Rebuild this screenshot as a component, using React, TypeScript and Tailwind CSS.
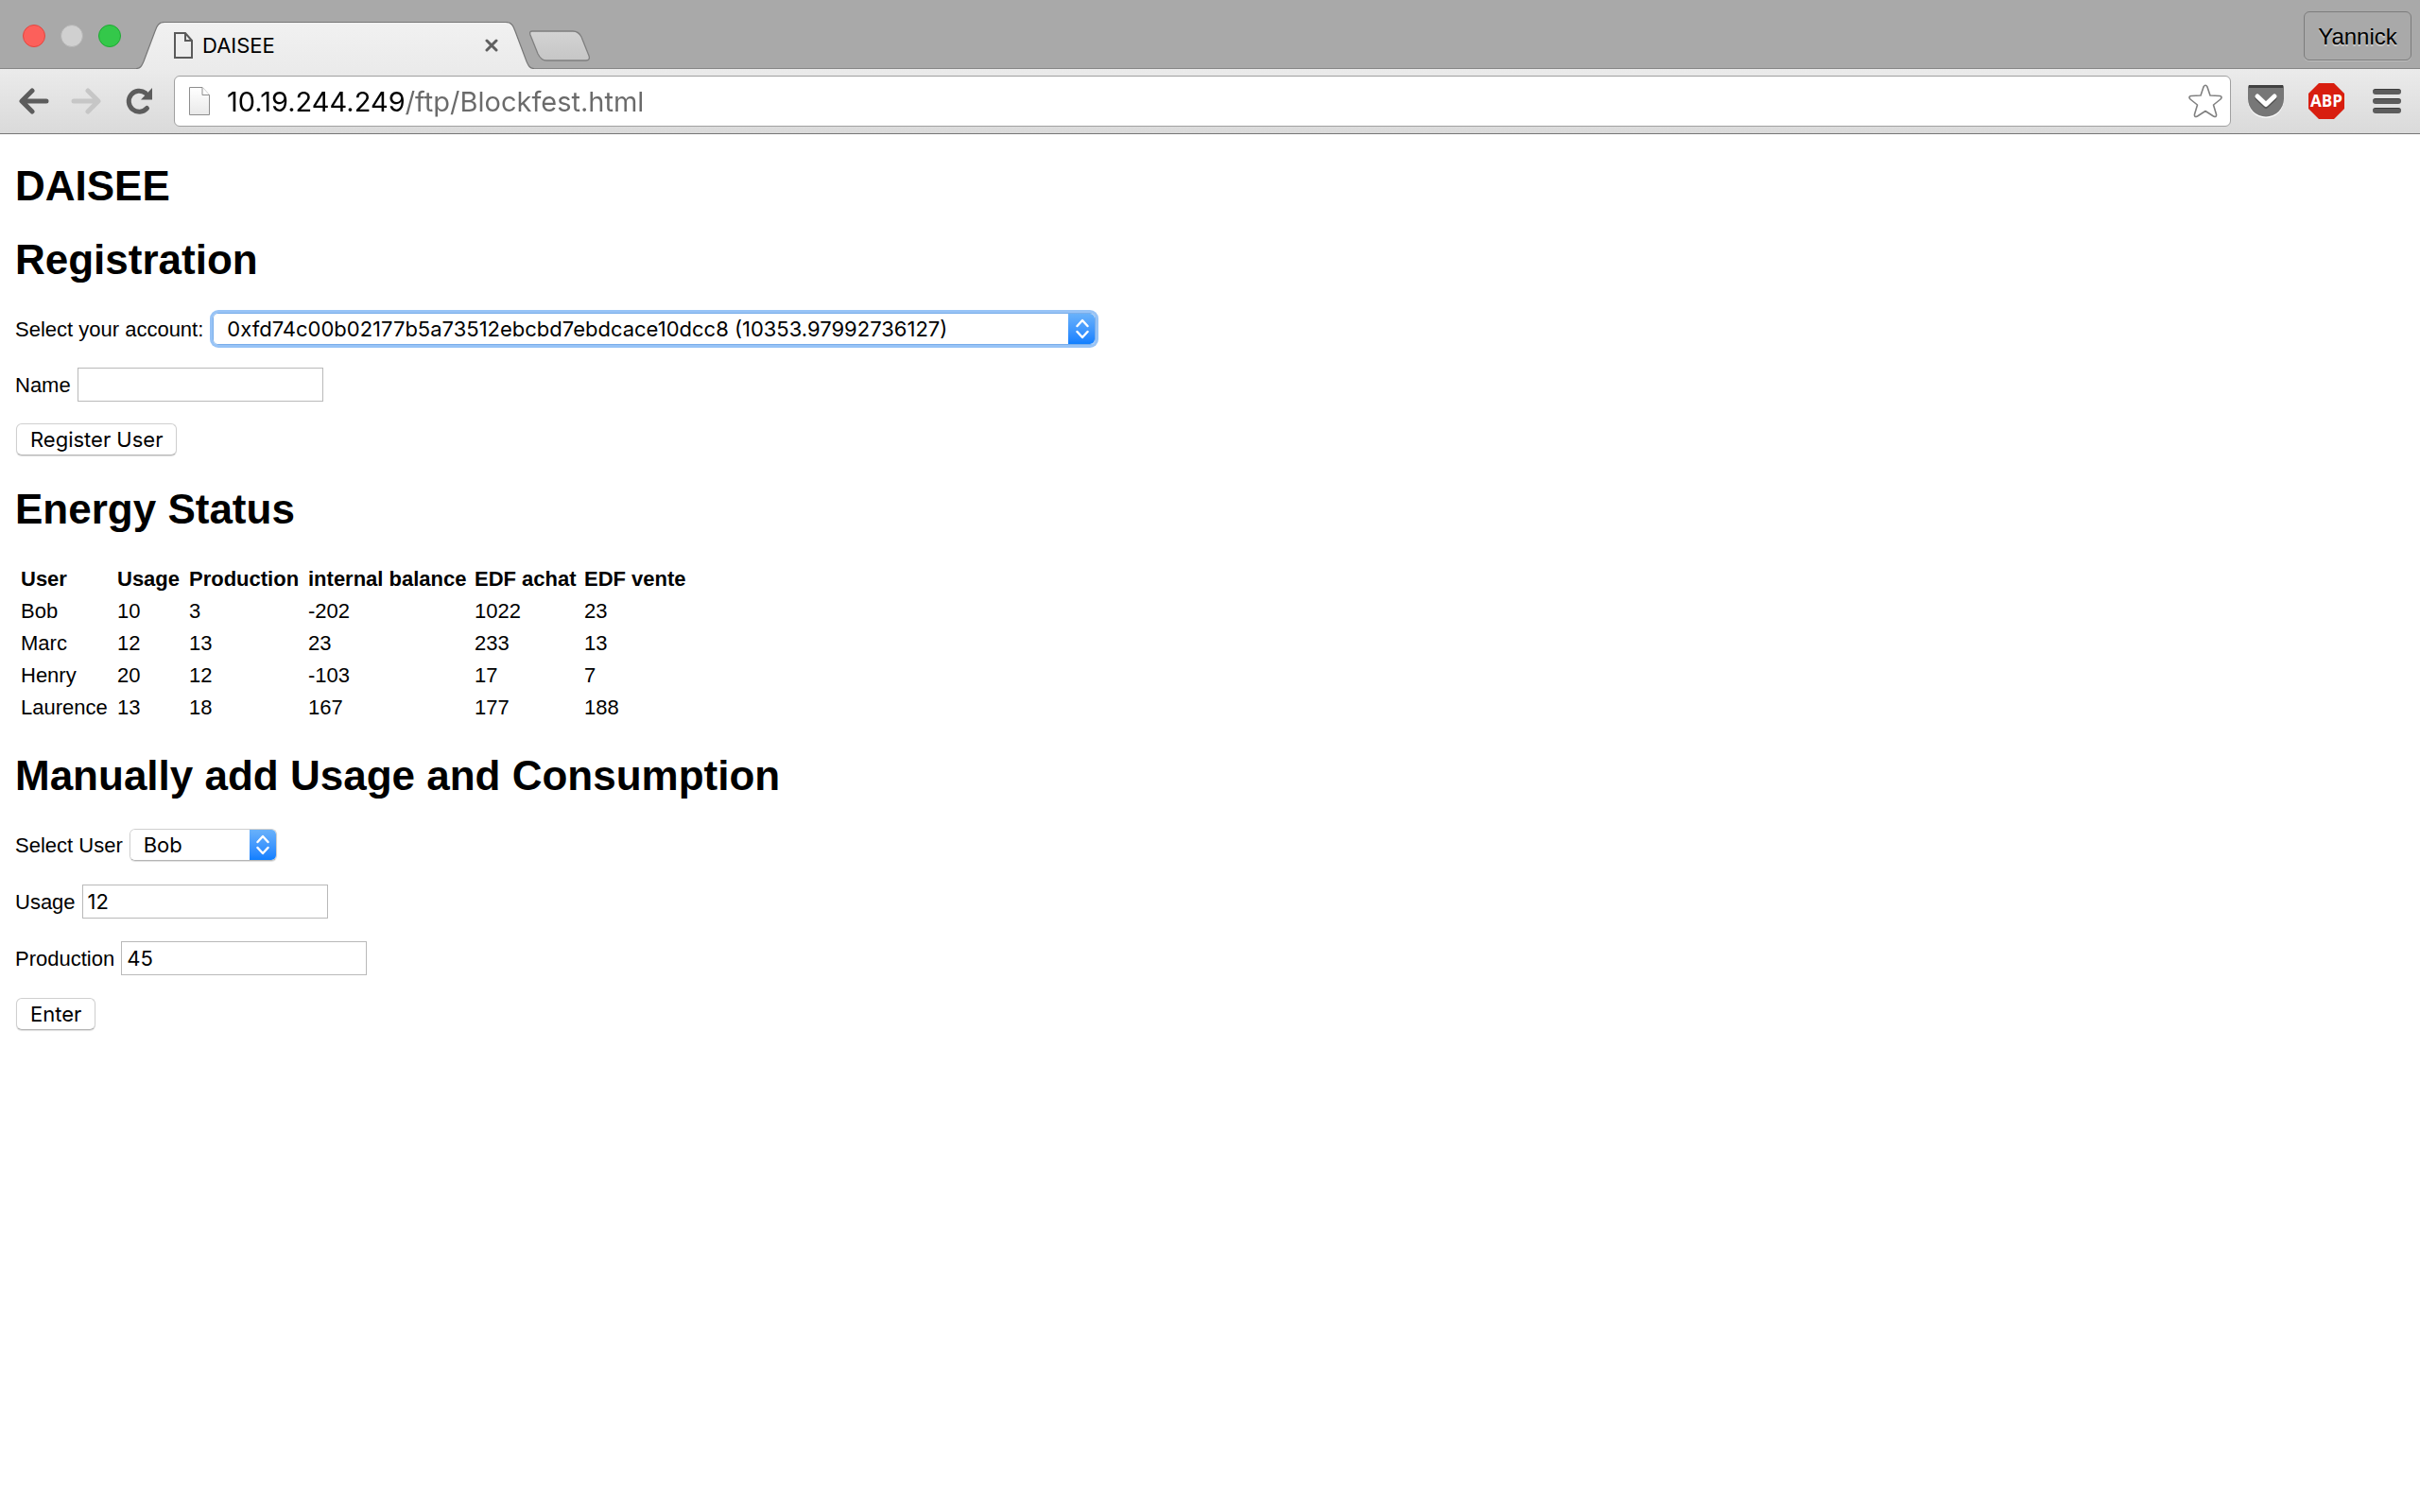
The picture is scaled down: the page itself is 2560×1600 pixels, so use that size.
import React, { useState } from "react";

const users = [
  ["Bob", "10", "3", "-202", "1022", "23"],
  ["Marc", "12", "13", "23", "233", "13"],
  ["Henry", "20", "12", "-103", "17", "7"],
  ["Laurence", "13", "18", "167", "177", "188"],
];

const columns = [
  { name: "User", width: "w-[102px]" },
  { name: "Usage", width: "w-[76px]" },
  { name: "Production", width: "w-[126px]" },
  { name: "internal balance", width: "w-[176px]" },
  { name: "EDF achat", width: "w-[116px]" },
  { name: "EDF vente", width: "w-[116px]" },
];

function TabStrip() {
  return (
    <div className="flex h-[73px] items-end bg-[#a9a9a9] shadow-[inset_0_-1px_0_#868686]">
      <div className="flex h-full w-36 shrink-0 items-center gap-4 pl-6 pt-[3px]">
        <button aria-label="Close window" className="size-6 rounded-full border border-[#e2463f] bg-[#fc605b]" />
        <button aria-label="Minimize window" className="size-6 rounded-full border border-[#b4b4b4] bg-[#d0d0d0]" />
        <button aria-label="Zoom window" className="size-6 rounded-full border border-[#1fa934] bg-[#34c84a]" />
      </div>
      <div className="flex h-[50px] shrink-0">
        <svg width="30" height="50" viewBox="0 0 30 50" aria-hidden="true">
          <defs>
            <linearGradient id="tabFill" x1="0" y1="0" x2="0" y2="1">
              <stop offset="0" stopColor="#f1f1f1" />
              <stop offset="1" stopColor="#ebebeb" />
            </linearGradient>
          </defs>
          <path d="M0 50 L0 49.5 C5 49.5 6 46 8 42 L20 10 C22 4 24 .5 30 .5 V50Z" fill="url(#tabFill)" />
          <path d="M0 49.5 C5 49.5 6 46 8 42 L20 10 C22 4 24 .5 30 .5" fill="none" stroke="#777" strokeWidth="1.2" />
        </svg>
        <div className="flex w-[361px] items-center border-t border-[#777] bg-linear-to-b from-[#f1f1f1] to-[#ebebeb] pb-0.5 pl-2.5">
          <svg width="20" height="28" viewBox="0 0 20 28" fill="none" stroke="#5a5a5a" strokeWidth="2" aria-hidden="true">
            <path d="M1 1H12L19 9V27H1Z" />
            <path d="M12 1V9H19" />
          </svg>
          <span className="ml-2.5 flex-1 text-[22px] leading-7 text-black">DAISEE</span>
          <button aria-label="Close tab" className="mr-2">
            <svg width="14" height="14" viewBox="0 0 14 14" stroke="#5f5f5f" strokeWidth="3" strokeLinecap="round" aria-hidden="true">
              <path d="M2 2L12 12M12 2L2 12" />
            </svg>
          </button>
        </div>
        <svg width="30" height="50" viewBox="0 0 30 50" aria-hidden="true">
          <path d="M0 50V.5 C6 .5 8 4 10 10 L22 42 C24 46 25 49.5 30 49.5 V50Z" fill="url(#tabFill)" />
          <path d="M0 .5 C6 .5 8 4 10 10 L22 42 C24 46 25 49.5 30 49.5" fill="none" stroke="#777" strokeWidth="1.2" />
        </svg>
      </div>
      <button aria-label="New tab" className="mb-2 -ml-[5px]">
        <svg width="64" height="33" viewBox="0 0 64 33" aria-hidden="true">
          <defs>
            <linearGradient id="newTab" x1="0" y1="0" x2="0" y2="1">
              <stop offset="0" stopColor="#d3d3d3" />
              <stop offset="1" stopColor="#c6c6c6" />
            </linearGradient>
          </defs>
          <path
            d="M3 1H46C51 1 53 3 55 7L63 27C64 30 63 32 60 32H18C13 32 11 29 9 25L1 5C0 2 1 1 3 1Z"
            fill="url(#newTab)"
            stroke="#7f7f7f"
            strokeWidth="1.3"
          />
        </svg>
      </button>
      <button className="mb-[9px] ml-auto mr-[9px] flex h-[52px] w-[114px] items-center justify-center rounded-md border border-[#7c7c7c] pt-0.5 font-['Liberation_Sans',sans-serif] text-[24px] leading-8 text-black shadow-[0_1px_0_#bdbdbd] [text-shadow:0_2px_0_#c9c9c9]">
        Yannick
      </button>
    </div>
  );
}

function Toolbar() {
  const [url, setUrl] = useState("10.19.244.249/ftp/Blockfest.html");
  return (
    <div className="flex h-[69px] items-center border-b border-[#767676] bg-linear-to-b from-[#ebebeb] to-[#dadada] px-5">
      <button aria-label="Back">
        <svg width="32" height="28" viewBox="0 0 32 28" fill="none" stroke="#5c5c5c" strokeWidth="5" strokeLinecap="round" strokeLinejoin="round" aria-hidden="true">
          <path d="M29 14H4M14 3L3 14L14 25" />
        </svg>
      </button>
      <button aria-label="Forward" className="ml-[23px]">
        <svg width="32" height="28" viewBox="0 0 32 28" fill="none" stroke="#c6c6c6" strokeWidth="5" strokeLinecap="round" strokeLinejoin="round" aria-hidden="true">
          <path d="M3 14H28M18 3L29 14L18 25" />
        </svg>
      </button>
      <button aria-label="Reload" className="ml-6">
        <svg width="32" height="30" viewBox="0 0 32 30" aria-hidden="true">
          <path d="M24.5 22.5A11 11 0 1 1 23 6.5" fill="none" stroke="#5c5c5c" strokeWidth="5" strokeLinecap="round" />
          <path d="M30 1V13.500H18Z" fill="#5c5c5c" />
        </svg>
      </button>
      <div className="ml-[21px] flex h-[54px] flex-1 items-center rounded-md border border-[#a0a0a0] bg-white pl-[15px] pr-2">
        <svg width="22" height="31" viewBox="0 0 22 31" aria-hidden="true">
          <defs>
            <linearGradient id="pageFill" x1="0" y1="0" x2="0" y2="1">
              <stop offset="0" stopColor="#fff" />
              <stop offset="1" stopColor="#e9e9e9" />
            </linearGradient>
          </defs>
          <path d="M.5 .5H14L21.500 8.500V29.500H.5Z" fill="url(#pageFill)" stroke="#8e8e8e" />
          <path d="M14 .5V8.500H21.500" fill="#fff" stroke="#8e8e8e" />
        </svg>
        <input
          aria-label="Address"
          value={url}
          onChange={(e) => setUrl(e.target.value)}
          className="ml-[18px] h-10 min-w-0 flex-1 bg-[linear-gradient(to_right,#000_190px,#6a6a6a_190px)] bg-clip-text pt-0.5 text-[29px] leading-10 text-transparent caret-black outline-none"
        />
        <button aria-label="Bookmark this page">
          <svg width="36" height="36" viewBox="0 0 36 36" fill="#fff" stroke="#808080" strokeWidth="1.6" strokeLinejoin="round" aria-hidden="true">
            <path d="M16 3Q18 -0.500 20 3L23 12L33 12.500Q36.500 13 34 16L26.500 22L29.500 32Q30 35.500 26.500 34L18 28.500L9.500 34Q6 35.500 6.500 32L9.500 22L2 16Q-0.500 13 3 12.500L13 12Z" />
          </svg>
        </button>
      </div>
      <button aria-label="Save to Pocket" className="ml-[18px] mt-0.5">
        <svg width="38" height="36" viewBox="0 0 38 36" fill="none" aria-hidden="true">
          <path d="M0 3Q0 1 2 1H36Q38 1 38 3V16A19 19 0 0 1 0 16Z" fill="#fafafa" />
          <path d="M0 2Q0 0 2 0H36Q38 0 38 2V14.500A19 19 0 0 1 0 14.500Z" fill="#777" />
          <path d="M1 1.500H37" stroke="#404040" strokeWidth="3" />
          <path d="M10 14L19 22.500L28 14" stroke="#555" strokeWidth="5" strokeLinecap="round" strokeLinejoin="round" />
          <path d="M10 12L19 20.500L28 12" stroke="#fff" strokeWidth="5" strokeLinecap="round" strokeLinejoin="round" />
        </svg>
      </button>
      <button
        aria-label="Adblock Plus"
        className="ml-[26px] flex size-[38px] items-center justify-center bg-[#d81e0f] font-['Open_Sans',sans-serif] text-[17px] font-bold leading-5 text-white [clip-path:polygon(29%_0,71%_0,100%_29%,100%_71%,71%_100%,29%_100%,0_71%,0_29%)]"
      >
        ABP
      </button>
      <button aria-label="Menu" className="ml-[30px] flex w-[30px] flex-col gap-1">
        <span className="h-1.5 w-full rounded-full border-t border-[#3c3c3c] bg-[#5c5c5c]" />
        <span className="h-1.5 w-full rounded-full border-t border-[#3c3c3c] bg-[#5c5c5c]" />
        <span className="h-1.5 w-full rounded-full border-t border-[#3c3c3c] bg-[#5c5c5c]" />
      </button>
    </div>
  );
}

function Heading({ children }: { children: React.ReactNode }) {
  return <h2 className="mb-[29px] text-[44px] font-bold leading-[52px]">{children}</h2>;
}

function Select({ id, option, width, focused }: { id: string; option: string; width: string; focused?: boolean }) {
  return (
    <div
      className={
        "relative h-[34px] overflow-hidden rounded-md border " +
        (focused
          ? "border-[#7aaeea] shadow-[0_0_0_3px_#97c3f6] "
          : "border-[#cfcfcf] border-b-[#b5b5b5] shadow-[0_1px_1px_#dedede] ") +
        width
      }
    >
      <select id={id} className="size-full appearance-none bg-white pl-3.5 font-[Inter,sans-serif] text-[22px] leading-8 outline-none">
        <option>{option}</option>
      </select>
      <span className="pointer-events-none absolute -right-px -top-px flex h-[34px] w-[29px] items-center justify-center bg-linear-to-b from-[#6bb3fa] to-[#077dff]">
        <svg width="14" height="22" viewBox="0 0 14 22" fill="none" stroke="#fff" strokeWidth="2.400" strokeLinecap="round" strokeLinejoin="round" aria-hidden="true">
          <path d="M1.500 8L7 2L12.500 8M1.500 14L7 20L12.500 14" />
        </svg>
      </span>
    </div>
  );
}

function TextField({ id, label, value }: { id: string; label: string; value: string }) {
  return (
    <div className="flex h-9 items-center gap-[7px]">
      <label htmlFor={id} className="pt-0.5">
        {label}
      </label>
      <input
        id={id}
        defaultValue={value}
        className="h-9 w-[260px] border border-[#b9b9b9] bg-white px-[5px] font-[Inter,sans-serif] text-[22px] leading-8 outline-none"
      />
    </div>
  );
}

function PushButton({ children }: { children: React.ReactNode }) {
  return (
    <button
      type="button"
      className="ml-px h-[34px] self-start rounded-md border border-[#cfcfcf] border-b-[#b5b5b5] bg-white px-3.5 font-[Inter,sans-serif] text-[22px] leading-8 shadow-[0_1px_1px_#dedede]"
    >
      {children}
    </button>
  );
}

export default function App() {
  return (
    <div className="min-h-screen bg-white font-[Inter,sans-serif] text-black">
      <header>
        <TabStrip />
        <Toolbar />
      </header>
      <main className="px-4 pt-[29px] font-['Liberation_Sans',Arial,sans-serif] text-[22px] leading-[34px]">
        <h1 className="mb-[26px] text-[44px] font-bold leading-[52px]">DAISEE</h1>

        <Heading>Registration</Heading>
        <form className="mb-[31px] flex flex-col gap-[23px]">
          <div className="flex h-9 items-center gap-2.5">
            <label htmlFor="account" className="pt-0.5">Select your account:</label>
            <Select id="account" option="0xfd74c00b02177b5a73512ebcbd7ebdcace10dcc8 (10353.97992736127)" width="w-[934px]" focused />
          </div>
          <TextField id="name" label="Name" value="" />
          <PushButton>Register User</PushButton>
        </form>

        <Heading>Energy Status</Heading>
        <table className="mb-[29px] ml-1.5 mt-[31px] table-fixed text-left">
          <thead>
            <tr>
              {columns.map((c) => (
                <th key={c.name} className={"whitespace-nowrap p-0 font-bold " + c.width}>
                  {c.name}
                </th>
              ))}
            </tr>
          </thead>
          <tbody>
            {users.map((row) => (
              <tr key={row[0]}>
                {row.map((cell, i) => (
                  <td key={i} className="p-0">
                    {cell}
                  </td>
                ))}
              </tr>
            ))}
          </tbody>
        </table>

        <Heading>Manually add Usage and Consumption</Heading>
        <form className="flex flex-col gap-6">
          <div className="flex h-9 items-center gap-[7px]">
            <label htmlFor="user" className="pt-0.5">Select User</label>
            <Select id="user" option="Bob" width="w-[156px]" />
          </div>
          <TextField id="usage" label="Usage" value="12" />
          <TextField id="production" label="Production" value="45" />
          <PushButton>Enter</PushButton>
        </form>
      </main>
    </div>
  );
}
